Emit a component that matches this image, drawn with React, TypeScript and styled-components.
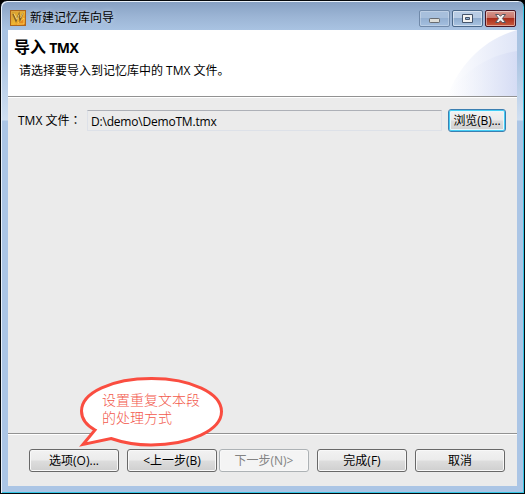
import React from "react";
import styled, { createGlobalStyle, css } from "styled-components";

const GlobalStyle = createGlobalStyle`
  * { box-sizing: border-box; }
  html, body { margin: 0; background: #000; overflow: hidden; }
  body { font: 12px/16px "Open Sans", "Noto Sans CJK SC", sans-serif; color: #000; }
`;

const Window = styled.main`
  position: relative;
  width: 525px;
  height: 494px;
  padding: 1px 7px 7px;
  border: 1px solid #05080c;
  border-radius: 7px 7px 0 0;
  display: flex;
  flex-direction: column;
  overflow: hidden;
  background: linear-gradient(#859fc2 0, #9bb4d4 15px, #a9c3e2 29px, #abc4e2 55px, #cfdff1 119px, #abc5e5 120px, #abc5e5 100%);
  box-shadow: inset 1px 1px 0 #e9f1fa, inset -1px -1px 0 #36c5e4;
`;

const TitleBar = styled.header`
  height: 28px;
  flex: none;
  display: flex;
  align-items: center;
  padding: 4px 1px 0 2px;
`;

const AppIcon = styled.svg`
  width: 16px;
  height: 16px;
  flex: none;
  margin: 0 4px 0 0;
`;

const WindowTitle = styled.h1`
  margin: 0;
  flex: 1;
  font: inherit;
  text-shadow: 0 0 5px rgba(255, 255, 255, 0.5);
`;

const CaptionButtons = styled.div`
  display: flex;
  gap: 2px;
  margin-top: 1px;
`;

const CaptionButton = styled.button<{ $tone?: "faded" | "close" }>`
  width: 31px;
  height: 17px;
  padding: 0;
  border: 1px solid #4b6889;
  border-radius: 2px;
  box-shadow: inset 0 0 0 1px rgba(255, 255, 255, 0.45);
  background: linear-gradient(#b8cce4 0 48%, #90adcf 50%, #a9c4e1);
  svg { display: block; width: 29px; height: 15px; }
  ${({ $tone }) => $tone === "faded" && css`
    border-color: #7089a9;
    background: linear-gradient(#a7bfdc 0 48%, #94b0d2 50%, #a4bfdf);
    box-shadow: inset 0 0 0 1px rgba(255, 255, 255, 0.25);
  `}
  ${({ $tone }) => $tone === "close" && css`
    border-color: #481423;
    background: linear-gradient(#d6978e 0, #c97468 47%, #ab2d1b 50%, #c85b3f 100%);
  `}
`;

const Client = styled.section`
  flex: 1;
  display: flex;
  flex-direction: column;
  background: #ebebeb;
`;

const Banner = styled.div`
  position: relative;
  height: 67px;
  flex: none;
  background: #fff;
  border-bottom: 1px solid #929292;
  box-shadow: 0 1px #fff;
  padding: 8px 6px;
`;

const BannerArt = styled.svg`
  position: absolute;
  right: 0;
  top: 0;
  width: 75px;
  height: 66px;
`;

const Heading = styled.h2`
  margin: 0;
  font: bold 14px/19px "Open Sans", "Noto Sans CJK SC", sans-serif;
  letter-spacing: -0.5px;
  span { font-size: 16px; letter-spacing: 0; }
`;

const Description = styled.p`
  margin: 6px 0 0 5px;
  line-height: 16px;
`;

const FormRow = styled.div`
  height: 23px;
  margin: 12px 11px 0 10px;
  display: flex;
  align-items: center;
`;

const Label = styled.label`
  width: 69px;
  padding-top: 1px;
  white-space: nowrap;
  font-family: "Open Sans", "Noto Sans CJK TC", sans-serif;
`;

const FileField = styled.input`
  width: 355px;
  height: 21px;
  padding: 1px 3px 0;
  border: 1px solid #dde1e8;
  border-top-color: #adb0b7;
  outline: none;
  background: #ebebeb;
  color: #000;
  font: inherit;
  letter-spacing: -0.2px;
`;

const Button = styled.button<{ $focused?: boolean }>`
  width: 90px;
  height: 23px;
  flex: none;
  padding: 1px 0 0;
  border: 1px solid #686868;
  border-radius: 3px;
  color: #000;
  font: inherit;
  white-space: nowrap;
  background: linear-gradient(#f2f2f2 0, #ebebeb 48%, #dddddd 52%, #cfcfcf 100%);
  box-shadow: inset 0 0 0 1px #f8f8f8;
  &:disabled {
    color: #838383;
    border-color: #adb2b5;
    background: #f4f4f4;
  }
  ${({ $focused }) => $focused && css`
    width: 58px;
    margin-left: 6px;
    letter-spacing: -0.15px;
    border-color: #3c7fb1;
    box-shadow: inset 0 0 0 1px #43cdf5, inset 0 0 0 2px #e9f7fa;
  `}
`;

const Footer = styled.footer`
  margin-top: auto;
  height: 53px;
  border-top: 1px solid #929292;
  box-shadow: inset 0 1px #fff;
  padding: 15px 12px 0 21px;
  display: flex;
  gap: 8px;
`;

const StepButtons = styled.div`
  display: flex;
  gap: 2px;
`;

const Callout = styled.aside`
  position: absolute;
  left: 77px;
  top: 374px;
  width: 148px;
  height: 74px;
  svg { position: absolute; inset: 0; }
`;

const CalloutText = styled.p`
  position: relative;
  margin: 15px 0 0 24px;
  width: 104px;
  color: #f2594c;
  font: 300 14px/18px "Noto Sans CJK SC", sans-serif;
  white-space: nowrap;
`;

export default function App() {
  return (
    <>
      <GlobalStyle />
      <Window>
        <TitleBar>
          <AppIcon viewBox="0 0 16 16">
            <defs>
              <linearGradient id="gold" x1="0" y1="0" x2="1" y2="1">
                <stop stopColor="#c9952d" />
                <stop offset=".55" stopColor="#f0b632" />
                <stop offset="1" stopColor="#d66812" />
              </linearGradient>
            </defs>
            <rect x=".5" y=".5" width="15" height="15" fill="url(#gold)" stroke="#ad651c" />
            <path d="M1.500 12V1.500h13" fill="none" stroke="#e0a83f" />
            <path d="M8 13l6-5v6H7" fill="#e68a20" stroke="#ffd957" strokeWidth=".8" />
            <path d="M3 4l3 7 3-7 1 6 3-7" fill="none" stroke="#8b6524" strokeWidth="1.500" />
            <path d="M4 3.500l3 6 2-5M10.500 8l2.500-5" fill="none" stroke="#f5dc8c" strokeWidth=".8" />
          </AppIcon>
          <WindowTitle>新建记忆库向导</WindowTitle>
          <CaptionButtons>
            <CaptionButton $tone="faded" aria-label="最小化">
              <svg viewBox="0 0 29 15"><rect x="9.5" y="7.5" width="10" height="4" rx=".7" fill="#deded9" stroke="#686c71" /></svg>
            </CaptionButton>
            <CaptionButton aria-label="最大化">
              <svg viewBox="0 0 29 15"><path fillRule="evenodd" d="M9.500 3.500h10v8h-10zM12.500 6.500h4v2h-4z" fill="#f3f3f1" stroke="#44546a" /></svg>
            </CaptionButton>
            <CaptionButton $tone="close" aria-label="关闭">
              <svg viewBox="0 0 29 15"><path d="M9.500 3.500h3.300l1.700 1.800 1.700-1.800h3.300l-3.100 4 3.100 4h-3.300l-1.700-1.800-1.700 1.800H9.500l3.100-4z" fill="#f6f4f3" stroke="#555761" /></svg>
            </CaptionButton>
          </CaptionButtons>
        </TitleBar>
        <Client>
          <Banner>
            <BannerArt viewBox="0 0 75 66">
              <defs>
                <linearGradient id="outerArc">
                  <stop stopColor="#fff" />
                  <stop offset="1" stopColor="#dfe5f7" />
                </linearGradient>
                <linearGradient id="innerArc">
                  <stop stopColor="#fff" stopOpacity=".2" />
                  <stop offset="1" stopColor="#d5dcf4" />
                </linearGradient>
              </defs>
              <path d="M5 66C18 35 40 10 75 0V66z" fill="url(#outerArc)" />
              <path d="M3 66C21 43 45 25 75 21V66z" fill="url(#innerArc)" />
            </BannerArt>
            <Heading><span>导入</span> TMX</Heading>
            <Description>请选择要导入到记忆库中的 TMX 文件。</Description>
          </Banner>
          <FormRow>
            <Label htmlFor="tmx" lang="zh-TW">TMX 文件：</Label>
            <FileField id="tmx" readOnly value={"D:\\demo\\DemoTM.tmx"} />
            <Button $focused>浏览(B)...</Button>
          </FormRow>
          <Footer>
            <Button>选项(O)...</Button>
            <StepButtons>
              <Button>&lt;上一步(B)</Button>
              <Button disabled>下一步(N)&gt;</Button>
            </StepButtons>
            <Button>完成(F)</Button>
            <Button>取消</Button>
          </Footer>
        </Client>
        <Callout>
          <svg width="148" height="74" viewBox="0 0 148 74" fill="#fff" stroke="#fa4d40" strokeWidth="3">
            <path d="M17 55C8 50 3.500 44 3.500 36C3.500 17.500 34 3.500 73.500 3.500S143.500 18 143.500 36.500S112 70 73 70C58 70 46 68 33 63.500L5 69.500Z" />
          </svg>
          <CalloutText>设置重复文本段<br />的处理方式</CalloutText>
        </Callout>
      </Window>
    </>
  );
}
